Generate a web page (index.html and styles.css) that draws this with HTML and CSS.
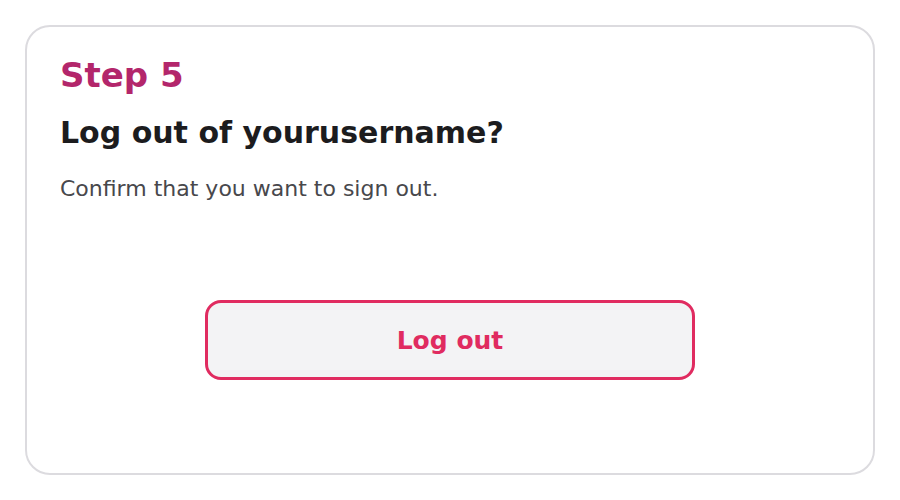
FILE: index.html
```html
<!DOCTYPE html>
<html lang="en">
<head>
<meta charset="utf-8">
<title>Log out</title>
<link rel="stylesheet" href="styles.css">
</head>
<body>
  <main class="page">
    <section class="card">
      <div class="step">Step 5</div>
      <h1 class="title">Log out of yourusername?</h1>
      <p class="desc">Confirm that you want to sign out.</p>
      <div class="actions">
        <button class="logout" type="button">Log out</button>
      </div>
    </section>
  </main>
</body>
</html>
```

FILE: styles.css
```css
html, body {
  margin: 0;
  padding: 0;
  background: #ffffff;
}

body {
  font-family: "DejaVu Sans", "Liberation Sans", sans-serif;
}

.page {
  padding: 25px;
}

.card {
  box-sizing: border-box;
  width: 850px;
  height: 450px;
  border: 2px solid #dcdbdf;
  border-radius: 25px;
  padding: 28px 33px;
  display: flex;
  flex-direction: column;
}

.step {
  font-size: 34px;
  line-height: 40px;
  font-weight: bold;
  color: #b3266b;
}

.title {
  margin: 20px 0 0;
  font-size: 30px;
  line-height: 36px;
  font-weight: bold;
  color: #1c1c1e;
}

.desc {
  margin: 23px 0 0;
  font-size: 22px;
  line-height: 30px;
  color: #48484c;
}

.actions {
  display: flex;
  justify-content: center;
  margin-top: 96px;
}

.logout {
  box-sizing: border-box;
  width: 490px;
  height: 80px;
  border: 3px solid #e02b60;
  border-radius: 16px;
  background: #f3f3f5;
  color: #e02b60;
  font-family: "DejaVu Sans", "Liberation Sans", sans-serif;
  font-size: 25px;
  line-height: 30px;
  font-weight: bold;
  padding: 2px 0 0;
  cursor: pointer;
}
```
